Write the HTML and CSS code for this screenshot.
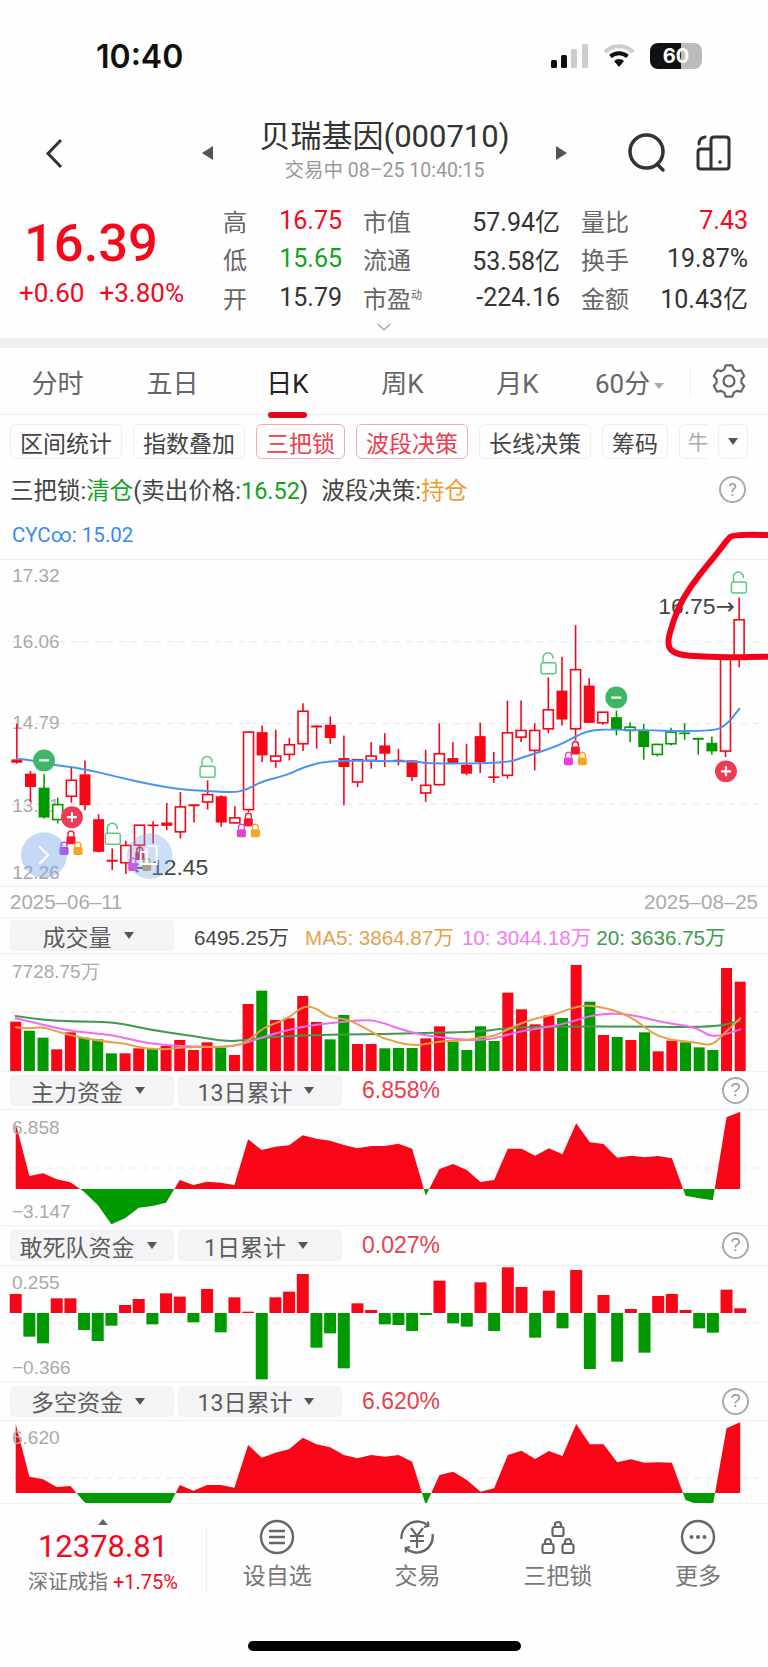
FILE: index.html
```html
<!DOCTYPE html>
<html lang="zh">

<head>
  <meta charset="UTF-8">
  <meta name="viewport" content="width=device-width, initial-scale=1.0">
  <title>贝瑞基因(000710)</title>
  <link rel="stylesheet" href="styles.css">
</head>

<body>

  <!-- 状态栏 -->
  <div class="status-bar">
    <span class="status-time">10:40</span>
    <div class="status-icons">
      <svg width="37" height="24" viewBox="0 0 37 24">
        <rect x="0" y="16" width="6" height="8" rx="1.5" fill="#111" />
        <rect x="10" y="11" width="6" height="13" rx="1.5" fill="#111" />
        <rect x="20" y="5" width="6" height="19" rx="1.5" fill="#ccc" />
        <rect x="31" y="0" width="6" height="24" rx="1.5" fill="#ccc" />
      </svg>
      <svg width="32" height="24" viewBox="0 0 32 24">
        <path d="M2 8 A20 20 0 0 1 30 8" fill="none" stroke="#ccc" stroke-width="4" />
        <path d="M7.500 12.500 A13 13 0 0 1 24.500 12.500" fill="none" stroke="#111" stroke-width="4" />
        <path d="M11 17 L16 23 L21 17 A7 7 0 0 0 11 17 Z" fill="#111" />
      </svg>
      <div class="battery"><span>60</span></div>
    </div>
  </div>

  <!-- 标题 -->
  <div class="stock-nav">
    <svg class="back-icon" width="18" height="31" viewBox="0 0 18 31">
      <path d="M16 2 L3 15.500 L16 29" fill="none" stroke="#333" stroke-width="3" />
    </svg>
    <span class="arrow-left"></span>
    <div class="stock-title">
      <h1>贝瑞基因(000710)</h1>
      <p>交易中 08–25 10:40:15</p>
    </div>
    <span class="arrow-right"></span>
    <div class="nav-icons">
      <svg width="41" height="40" viewBox="0 0 41 40">
        <circle cx="19.500" cy="18.500" r="16.500" fill="none" stroke="#333" stroke-width="3.500" />
        <path d="M30 31 L36 37" stroke="#333" stroke-width="3.500" stroke-linecap="round" />
      </svg>
      <svg width="35" height="36" viewBox="0 0 35 36">
        <path d="M15 34 V5 Q15 2 18 2 H30 Q33 2 33 5 V31 Q33 34 30 34 H5 Q2 34 2 31 V17 Q2 14 5 14 H15" fill="none" stroke="#333" stroke-width="3" stroke-linejoin="round" />
        <path d="M3 9 Q3 3 9 2" fill="none" stroke="#333" stroke-width="3" stroke-linecap="round" />
        <circle cx="24" cy="27" r="1.800" fill="#333" />
      </svg>
    </div>
  </div>

  <!-- 行情 -->
  <div class="quote">
    <div class="price-box">
      <div class="price">16.39</div>
      <div class="change"><span>+0.60</span><span>+3.80%</span></div>
    </div>
    <div class="stats">
      <span class="stat-label">高</span><span class="stat-value red">16.75</span>
      <span class="stat-label gap">市值</span><span class="stat-value">57.94亿</span>
      <span class="stat-label gap">量比</span><span class="stat-value red">7.43</span>
      <span class="stat-label">低</span><span class="stat-value green">15.65</span>
      <span class="stat-label gap">流通</span><span class="stat-value">53.58亿</span>
      <span class="stat-label gap">换手</span><span class="stat-value">19.87%</span>
      <span class="stat-label">开</span><span class="stat-value">15.79</span>
      <span class="stat-label gap">市盈<sup>动</sup></span><span class="stat-value">-224.16</span>
      <span class="stat-label gap">金额</span><span class="stat-value">10.43亿</span>
    </div>
  </div>
  <div class="expand">
    <svg width="14" height="9" viewBox="0 0 14 9">
      <path d="M1 1 L7 7 L13 1" fill="none" stroke="#aaa" stroke-width="1.500" />
    </svg>
  </div>
  <div class="divider"></div>

  <!-- 周期 -->
  <div class="period-tabs">
    <span class="period">分时</span>
    <span class="period">五日</span>
    <span class="period active">日K</span>
    <span class="period">周K</span>
    <span class="period">月K</span>
    <span class="period period-more">60分<i class="tri-small"></i></span>
    <span class="period-gear">
      <svg width="36" height="36" viewBox="0 0 36 36">
        <polygon points="13.3,6.400 14.670,2.350 21.330,2.350 22.700,6.400 25.700,8.150 29.900,7.300 33.200,13.060 30.400,16.260 30.400,19.740 33.200,22.940 29.900,28.700 25.700,27.850 22.700,29.600 21.330,33.650 14.670,33.650 13.300,29.600 10.300,27.850 6.100,28.700 2.800,22.940 5.600,19.740 5.600,16.260 2.800,13.060 6.100,7.300 10.300,8.150" fill="none" stroke="#666" stroke-width="2.200" stroke-linejoin="round" />
        <circle cx="18" cy="18" r="5.500" fill="none" stroke="#666" stroke-width="2.200" />
      </svg>
    </span>
  </div>

  <!-- 指标按钮 -->
  <div class="chip-row">
    <div class="chip-scroll">
      <span class="chip">区间统计</span>
      <span class="chip">指数叠加</span>
      <span class="chip on">三把锁</span>
      <span class="chip on">波段决策</span>
      <span class="chip">长线决策</span>
      <span class="chip">筹码</span>
      <span class="chip faded">牛</span>
    </div>
    <span class="chip chip-more"><i class="tri"></i></span>
  </div>

  <div class="signal-row">
    <span>三把锁:<b class="green">清仓</b>(卖出价格:<b class="green">16.52</b>)</span>
    <span class="signal-second">波段决策:<b class="orange">持仓</b></span>
    <span class="help">?</span>
  </div>
  <div class="cyc-row">CYC∞: 15.02</div>

  <!-- K线 -->
  <svg id="kChart" class="panel kline" width="768" height="327"></svg>
  <div class="date-row"><span>2025–06–11</span><span>2025–08–25</span></div>

  <!-- 成交量 -->
  <div class="panel-head vol-head">
    <span class="select">成交量<i class="tri"></i></span>
    <span class="vol-now">6495.25万</span>
    <span class="ma5">MA5: 3864.87万</span>
    <span class="ma10">10: 3044.18万</span>
    <span class="ma20">20: 3636.75万</span>
  </div>
  <svg id="volChart" class="panel" width="768" height="117"></svg>

  <div class="panel-head">
    <span class="select">主力资金<i class="tri"></i></span>
    <span class="select">13日累计<i class="tri"></i></span>
    <span class="pct">6.858%</span>
    <span class="help">?</span>
  </div>
  <svg id="mainChart" class="panel" width="768" height="115"></svg>

  <div class="panel-head tall-head">
    <span class="select">敢死队资金<i class="tri"></i></span>
    <span class="select">1日累计<i class="tri"></i></span>
    <span class="pct">0.027%</span>
    <span class="help">?</span>
  </div>
  <svg id="hotChart" class="panel" width="768" height="115"></svg>

  <div class="panel-head mid-head">
    <span class="select">多空资金<i class="tri"></i></span>
    <span class="select">13日累计<i class="tri"></i></span>
    <span class="pct">6.620%</span>
    <span class="help">?</span>
  </div>
  <svg id="longChart" class="panel" width="768" height="82"></svg>

  <!-- 底部 -->
  <div class="footer">
    <div class="footer-main">
      <div class="index-box">
        <i class="tri-up"></i>
        <div class="index-value">12378.81</div>
        <div class="index-name">深证成指 <span class="red">+1.75%</span></div>
      </div>
      <div class="footer-tabs">
        <div class="footer-tab">
          <svg width="36" height="36" viewBox="0 0 36 36">
            <circle cx="18" cy="18" r="16" fill="none" stroke="#666" stroke-width="2.400" />
            <path d="M10 12 H26 M10 18 H26 M10 24 H26" stroke="#666" stroke-width="2.400" />
          </svg>
          <span>设自选</span>
        </div>
        <div class="footer-tab">
          <svg width="36" height="36" viewBox="0 0 36 36">
            <path d="M2.500 20 A16 16 0 0 1 29 6.500 M33.500 15 A16 16 0 0 1 7 29.500" fill="none" stroke="#666" stroke-width="2.400" />
            <path d="M25 8 L29.500 7 L29 2.500 M11 28 L6.500 29 L7 33.500" fill="none" stroke="#666" stroke-width="2" />
            <path d="M12 9 L18 17 L24 9 M11 17 H25 M11 22 H25 M18 17 V29" fill="none" stroke="#666" stroke-width="2.200" />
          </svg>
          <span>交易</span>
        </div>
        <div class="footer-tab">
          <svg width="36" height="36" viewBox="0 0 36 36">
            <g fill="none" stroke="#666" stroke-width="2.200">
              <rect x="12.500" y="8" width="11" height="9" rx="2" />
              <path d="M15 8 V6 A3 3 0 0 1 21 6 V8" />
              <rect x="2.500" y="25" width="11" height="9" rx="2" />
              <path d="M5 25 V23 A3 3 0 0 1 11 23 V25" />
              <rect x="22.500" y="25" width="11" height="9" rx="2" />
              <path d="M25 25 V23 A3 3 0 0 1 31 23 V25" />
            </g>
          </svg>
          <span>三把锁</span>
        </div>
        <div class="footer-tab">
          <svg width="36" height="36" viewBox="0 0 36 36">
            <circle cx="18" cy="18" r="16" fill="none" stroke="#666" stroke-width="2.400" />
            <circle cx="11.500" cy="18" r="2" fill="#666" />
            <circle cx="18" cy="18" r="2" fill="#666" />
            <circle cx="24.500" cy="18" r="2" fill="#666" />
          </svg>
          <span>更多</span>
        </div>
      </div>
    </div>
    <div class="home-bar"></div>
  </div>

  <script src="chart.js"></script>

</body>

</html>
```

FILE: styles.css
```css
body {
  font-family: Roboto, "Noto Sans CJK SC", sans-serif;
  margin: 0;
  width: 768px;
  height: 1667px;
  overflow: hidden;
  background: #fefefe;
  color: #333;
}

.red {
  color: #f5081c;
}

.green {
  color: #12a21e;
}

.orange {
  color: #f59a30;
}

b {
  font-weight: normal;
}

/* 状态栏 */
.status-bar {
  height: 112px;
  display: flex;
  align-items: center;
  justify-content: space-between;
  padding: 0 66px 0 96px;
}

.status-time {
  font-family: Inter, sans-serif;
  font-size: 32px;
  font-weight: 600;
  color: #111;
}

.status-icons {
  display: flex;
  align-items: center;
  gap: 15px;
}

.battery {
  width: 52px;
  height: 26px;
  border-radius: 8px;
  background: linear-gradient(to right, #111 60%, #bbb 60%);
  color: white;
  font-family: Inter, sans-serif;
  font-size: 20px;
  font-weight: 700;
  line-height: 26px;
  text-align: center;
}

/* 标题 */
.stock-nav {
  height: 88px;
  display: grid;
  grid-template-columns: 202px 11px 343px 11px 1fr;
  align-items: center;
  padding-bottom: 12px;
  box-sizing: border-box;
}

.back-icon {
  margin: 6px 0 0 45px;
}

.arrow-left,
.arrow-right {
  width: 0;
  height: 0;
  margin-top: 6px;
  border-top: 7px solid transparent;
  border-bottom: 7px solid transparent;
}

.arrow-left {
  border-right: 11px solid #555;
}

.arrow-right {
  border-left: 11px solid #555;
}

.stock-title {
  text-align: center;
}

.stock-title h1 {
  margin: 0;
  font-size: 31px;
  font-weight: normal;
  line-height: 38px;
}

.stock-title p {
  margin: 4px 0 0;
  font-size: 19.500px;
  line-height: 22px;
  color: #999;
}

.nav-icons {
  display: flex;
  align-items: center;
  gap: 28px;
  margin-top: 6px;
  padding-left: 60px;
}

/* 行情 */
.quote {
  height: 118px;
  display: flex;
  padding-top: 1px;
  box-sizing: border-box;
}

.price-box {
  width: 223px;
  flex-shrink: 0;
}

.price {
  font-size: 52.500px;
  font-weight: 500;
  line-height: 56px;
  color: #f5081c;
  padding: 14px 0 0 24px;
}

.change {
  display: flex;
  gap: 15px;
  padding: 7px 0 0 19px;
  font-size: 26px;
  line-height: 30px;
  color: #f5081c;
}

.stats {
  display: grid;
  grid-template-columns: 40px 79px 101px 117px 72px 116px;
  grid-auto-rows: 38.500px;
  align-items: center;
  font-size: 25px;
}

.stat-label {
  color: #666;
  font-size: 24px;
}

.stat-label.gap {
  padding-left: 21px;
}

.stat-label sup {
  font-size: 11px;
  line-height: 0;
}

.stat-value {
  text-align: right;
}

.expand {
  height: 20px;
  padding-top: 5px;
  box-sizing: border-box;
}

.expand svg {
  display: block;
  margin: 0 auto;
}

.divider {
  height: 10px;
  background: #eee;
}

/* 周期 */
.period-tabs {
  height: 67px;
  display: flex;
  align-items: center;
  border-bottom: 1px solid #efefef;
  box-sizing: border-box;
}

.period {
  position: relative;
  width: 115px;
  flex-shrink: 0;
  text-align: center;
  font-size: 26px;
  color: #666;
}

.period.active {
  color: #222;
}

.period.active::after {
  content: "";
  position: absolute;
  left: 38px;
  bottom: -18px;
  width: 39px;
  height: 6px;
  border-radius: 3px;
  background: #e8061c;
}

.period-more {
  text-align: left;
  padding-left: 20px;
  box-sizing: border-box;
}

.tri-small {
  display: inline-block;
  margin-left: 4px;
  vertical-align: 4px;
  border-left: 5px solid transparent;
  border-right: 5px solid transparent;
  border-top: 6px solid #aaa;
}

.period-gear {
  height: 30px;
  display: flex;
  align-items: center;
  border-left: 1px solid #eee;
  padding-left: 20px;
}

/* 指标按钮 */
.chip-row {
  height: 35px;
  display: flex;
  margin: 9px 20px 0 10px;
  gap: 10px;
}

.chip-scroll {
  width: 698px;
  display: flex;
  gap: 11px;
}

.chip {
  flex-shrink: 0;
  display: flex;
  align-items: center;
  justify-content: center;
  padding: 0 9px;
  font-size: 23px;
  color: #444;
  border: 1px solid #eee;
  border-radius: 6px;
}

.chip.on {
  color: #e94050;
  border-color: #f6a8b0;
}

/* 被更多按钮挡住的最后一个 */
.chip.faded {
  padding: 0 0 0 8px;
  border-right: none;
  border-radius: 6px 0 0 6px;
  font-size: 20px;
  color: #aaa;
}

.chip-more {
  width: 30px;
  padding: 0;
  box-sizing: border-box;
}

.tri {
  display: inline-block;
  border-left: 5px solid transparent;
  border-right: 5px solid transparent;
  border-top: 7px solid #555;
}

.signal-row {
  height: 60px;
  display: flex;
  align-items: center;
  padding: 0 22px 0 10px;
  font-size: 23.500px;
  color: #444;
}

.signal-second {
  margin-left: 13px;
}

.help {
  width: 23px;
  height: 23px;
  margin-left: auto;
  border: 2px solid #aaa;
  border-radius: 50%;
  text-align: center;
  font-size: 18px;
  line-height: 23px;
  color: #999;
}

.cyc-row {
  height: 40px;
  padding: 0 0 8px 12px;
  box-sizing: border-box;
  display: flex;
  align-items: center;
  font-size: 20.500px;
  color: #3b8bee;
}

/* 图表 */
.panel {
  display: block;
}

.kline {
  overflow: visible;
  border-top: 1px solid #eee;
  box-sizing: border-box;
}

.axis-text {
  font-family: "Liberation Sans", sans-serif;
  font-size: 19px;
  fill: #aaa;
}

.mark-text {
  font-family: "Liberation Sans", sans-serif;
  font-size: 23px;
  fill: #444;
}

.mark-arrow {
  font-family: "DejaVu Sans", sans-serif;
}

.date-row {
  height: 31px;
  display: flex;
  justify-content: space-between;
  align-items: center;
  padding: 0 10px;
  border-top: 1px solid #eee;
  box-sizing: border-box;
  font-family: "Liberation Sans", sans-serif;
  font-size: 20.500px;
  color: #aaa;
}

.panel-head {
  height: 39px;
  display: flex;
  align-items: center;
  gap: 4px;
  padding: 0 19px 0 10px;
  border-bottom: 1px solid #eee;
  border-top: 1px solid #f2f2f2;
  box-sizing: border-box;
  font-family: "Liberation Sans", "Noto Sans CJK SC", sans-serif;
  font-size: 20.600px;
}

.vol-head {
  height: 37px;
}

.tall-head {
  height: 41px;
}

.mid-head {
  height: 40px;
}

.select {
  width: 164px;
  height: 31px;
  flex-shrink: 0;
  display: flex;
  align-items: center;
  justify-content: center;
  gap: 12px;
  padding-right: 8px;
  box-sizing: border-box;
  background: #f4f4f6;
  border-radius: 4px;
  font-family: Roboto, "Noto Sans CJK SC", sans-serif;
  font-size: 23px;
  color: #5c5c5c;
}

.vol-now {
  margin-left: 16px;
  color: #444;
}

.ma5 {
  margin-left: 12px;
  color: #e5a34c;
}

.ma10 {
  margin-left: 4px;
  color: #f47cf0;
}

.ma20 {
  margin-left: 1px;
  color: #3f9a4e;
}

.pct {
  margin-left: 16px;
  color: #e94050;
  font-size: 23px;
}

/* 底部 */
.footer {
  height: 164px;
  border-top: 1px solid #f2f2f2;
  box-sizing: border-box;
  background: #fefefe;
}

.footer-main {
  display: flex;
  height: 137px;
}

.index-box {
  width: 207px;
  height: 64px;
  margin-top: 24px;
  border-right: 1px solid #eee;
  box-sizing: border-box;
  position: relative;
  text-align: center;
}

.tri-up {
  position: absolute;
  top: -9px;
  left: 98px;
  border-left: 5px solid transparent;
  border-right: 5px solid transparent;
  border-bottom: 6px solid #666;
}

.index-value {
  font-size: 31px;
  line-height: 38px;
  color: #f5081c;
}

.index-name {
  font-size: 20px;
  line-height: 26px;
  margin-top: 3px;
  color: #777;
}

.footer-tabs {
  flex: 1;
  display: grid;
  grid-template-columns: repeat(4, 1fr);
}

.footer-tab {
  display: flex;
  flex-direction: column;
  align-items: center;
  padding-top: 15px;
  font-size: 23px;
  color: #777;
}

.footer-tab span {
  margin-top: 2px;
}

.home-bar {
  width: 273px;
  height: 10px;
  margin: 0 auto;
  border-radius: 5px;
  background: #000;
}
```

FILE: chart.js
```js
// 所有坐标都是页面像素，viewBox 直接对齐页面位置
const RED = '#f80517';
const GREEN = '#009a00';
const SVG_NS = 'http://www.w3.org/2000/svg';

function el(parent, name, attrs, text) {
  const node = document.createElementNS(SVG_NS, name);
  for (const k in attrs) node.setAttribute(k, attrs[k]);
  if (text) node.textContent = text;
  parent.appendChild(node);
  return node;
}

function setup(id, top) {
  const svg = document.getElementById(id);
  svg.setAttribute('viewBox', `0 ${top} 768 ${svg.getAttribute('height')}`);
  return svg;
}

const barX = i => 15.7 + 13.67 * i;

function dashed(svg, y) {
  el(svg, 'line', { x1: 10, x2: 759, y1: y, y2: y, stroke: '#e6e6e6', 'stroke-dasharray': '6 6' });
}

function label(svg, x, y, text) {
  el(svg, 'text', { x, y: y + 7, class: 'axis-text' }, text);
}

// 折线转圆滑曲线，经过相邻点的中点
function smooth(svg, pts, color, width) {
  let d = `M${pts[0][0]} ${pts[0][1]}`;
  for (let i = 1; i < pts.length - 1; i++) {
    const mx = (pts[i][0] + pts[i + 1][0]) / 2;
    const my = (pts[i][1] + pts[i + 1][1]) / 2;
    d += ` Q${pts[i][0]} ${pts[i][1]} ${mx} ${my}`;
  }
  const last = pts[pts.length - 1];
  d += ` L${last[0]} ${last[1]}`;
  el(svg, 'path', { d, fill: 'none', stroke: color, 'stroke-width': width, 'stroke-linecap': 'round' });
}

// K线: [最高, 最低, 实体上, 实体下, 类型] h空心红 f实心红 g实心绿 o空心绿
const leftCandles = [
  [490, 610, 597, 607, 'f'], [632, 725, 640, 680, 'f'], [642, 775, 682, 772, 'g'], [712, 790, 733, 778, 'o'],
  [623, 727, 660, 708, 'h'], [600, 750, 642, 735, 'f'], [762, 877, 777, 875, 'f'], [865, 930, 899, 905, 'f'],
  [842, 942, 856, 908, 'h'], [795, 890, 795, 855, 'h'], [783, 850, 793, 798, 'f'], [728, 810, 787, 797, 'f'],
  [695, 835, 740, 815, 'h'], [732, 787, 732, 738, 'f'], [660, 748, 703, 725, 'h'], [705, 800, 708, 787, 'f'],
  [738, 790, 773, 788, 'h'], [513, 755, 515, 748, 'h'], [495, 605, 515, 585, 'f'], [508, 622, 587, 602, 'h'],
  [532, 600, 553, 582, 'h'], [428, 572, 452, 550, 'h'], [495, 565, 495, 501, 'f'], [468, 550, 493, 533, 'f'],
  [525, 735, 593, 620, 'f'], [598, 680, 598, 665, 'h'], [545, 625, 587, 600, 'h']
].map(c => [560 + c[0] / 3, 560 + c[1] / 3, 560 + c[2] / 3, 560 + c[3] / 3, c[4]]);

const rightCandles = [
  [608, 710, 645, 670, 'f'], [655, 705, 688, 693, 'f'], [690, 752, 690, 740, 'f'], [658, 815, 765, 788, 'h'],
  [578, 765, 670, 763, 'h'], [635, 700, 683, 700, 'f'], [640, 735, 703, 730, 'f'], [577, 728, 617, 695, 'f'],
  [665, 758, 738, 743, 'f'], [510, 745, 607, 735, 'h'], [510, 635, 600, 620, 'h'], [578, 720, 600, 660, 'h'],
  [440, 608, 538, 595, 'h'], [378, 585, 480, 567, 'f'], [283, 630, 417, 595, 'h'], [443, 577, 465, 577, 'f'],
  [545, 583, 545, 577, 'h'], [540, 615, 560, 597, 'g'], [575, 635, 590, 600, 'o'], [580, 688, 600, 650, 'g'],
  [640, 678, 642, 672, 'o'], [592, 645, 605, 640, 'o'], [578, 628, 606, 611, 'g'], [622, 673, 622, 628, 'g'],
  [618, 673, 637, 663, 'g'], [375, 680, 375, 662, 'h'], [200, 410, 267, 385, 'h']
].map(c => [530 + c[0] / 3, 530 + c[1] / 3, 530 + c[2] / 3, 530 + c[3] / 3, c[4]]);

function drawCandles(svg, candles) {
  candles.forEach((c, i) => {
    const x = barX(i);
    const color = c[4] === 'h' || c[4] === 'f' ? RED : GREEN;
    el(svg, 'line', { x1: x, x2: x, y1: c[0], y2: c[1], stroke: color, 'stroke-width': 1.6 });
    if (c[4] === 'h' || c[4] === 'o') {
      el(svg, 'rect', { x: x - 5, y: c[2], width: 10, height: c[3] - c[2], fill: '#fff', stroke: color, 'stroke-width': 1.6 });
    } else {
      el(svg, 'rect', { x: x - 5.5, y: c[2], width: 11, height: c[3] - c[2], fill: color });
    }
  });
}

function openLock(svg, x, y) {
  const g = el(svg, 'g', { fill: 'none', stroke: '#5cc97d', 'stroke-width': 1.5 });
  el(g, 'rect', { x: x - 7.5, y: y - 1, width: 15, height: 11, rx: 2 });
  el(g, 'path', { d: `M${x - 5.5} ${y - 1} V${y - 6} A5 5 0 0 1 ${x + 4.5} ${y - 6} V${y - 5}` });
}

function smallLock(svg, x, y, color) {
  el(svg, 'rect', { x: x - 4.5, y: y - 2, width: 9, height: 8, rx: 1.5, fill: color });
  el(svg, 'path', { d: `M${x - 3} ${y - 2} V${y - 4} A3 3 0 0 1 ${x + 3} ${y - 4} V${y - 2}`, fill: 'none', stroke: color, 'stroke-width': 1.4 });
}

function lockGroup(svg, x, y, left, right) {
  smallLock(svg, x, y, '#f0162c');
  smallLock(svg, x - 7, y + 11, left);
  smallLock(svg, x + 7, y + 11, right);
}

function signal(svg, x, y, color, plus) {
  el(svg, 'circle', { cx: x, cy: y, r: 11, fill: color });
  el(svg, 'path', { d: plus ? `M${x - 5} ${y} H${x + 5} M${x} ${y - 5} V${y + 5}` : `M${x - 5} ${y} H${x + 5}`, stroke: '#fff', 'stroke-width': 2.2 });
}

function drawKChart() {
  const svg = setup('kChart', 559);
  [641, 723, 804].forEach(y => dashed(svg, y));
  label(svg, 11, 574, '17.32');
  label(svg, 11, 640, '16.06');
  label(svg, 11, 722, '14.79');
  label(svg, 11, 805, '13.61');
  label(svg, 11, 872, '12.26');

  drawCandles(svg, leftCandles.concat(rightCandles));

  // CYC∞ 线
  const blue = [[47, 595], [100, 600], [130, 610], [250, 625], [350, 650], [450, 672], [540, 688], [620, 692], [700, 697], [740, 688], [785, 662], [860, 645], [910, 620], [985, 600], [1150, 602]]
    .map(p => [p[0] / 3, 560 + p[1] / 3]);
  const blue2 = [[100, 693], [130, 700], [370, 698], [420, 680], [530, 645], [610, 598], [700, 597], [985, 604], [1030, 585], [1069, 535]]
    .map(p => [384 + p[0] / 3, 530 + p[1] / 3]);
  smooth(svg, blue.concat(blue2), '#4a94f0', 2);

  signal(svg, 43, 760, '#3db765', false);
  signal(svg, 617, 697, '#3db765', false);
  signal(svg, 71, 817, '#ea3c55', true);
  signal(svg, 727, 771, '#ea3c55', true);

  openLock(svg, 207, 767);
  openLock(svg, 112, 834);
  openLock(svg, 549, 663);
  openLock(svg, 740, 582);

  const low = el(svg, 'text', { x: 131, y: 875, class: 'mark-text' });
  el(low, 'tspan', { class: 'mark-arrow' }, '←');
  el(low, 'tspan', {}, '12.45');
  const high = el(svg, 'text', { x: 659, y: 613, class: 'mark-text' }, '16.75');
  el(high, 'tspan', { class: 'mark-arrow' }, '→');

  lockGroup(svg, 70, 838, '#b93fd8', '#f5a623');
  lockGroup(svg, 248, 820, '#e83fd8', '#f5a623');
  lockGroup(svg, 139, 854, '#e83fd8', '#c89a4a');
  lockGroup(svg, 576, 748, '#e83fd8', '#f5a623');

  // 悬浮按钮
  el(svg, 'circle', { cx: 43, cy: 855, r: 23, fill: 'rgba(120,165,235,.42)' });
  el(svg, 'path', { d: 'M38 846 L47 855 L38 864', fill: 'none', stroke: '#fff', 'stroke-width': 2 });
  el(svg, 'circle', { cx: 149, cy: 856, r: 23, fill: 'rgba(120,165,235,.36)' });
  el(svg, 'path', { d: 'M146 848 V864 M146 846 H156 V864 H140 V852 H146', fill: 'none', stroke: '#fff', 'stroke-width': 2 });

  // 手绘红圈
  const ink = [[1152, 12], [1050, 8], [1030, 30], [1000, 70], [950, 130], [900, 200], [870, 270], [850, 345], [880, 372], [960, 378], [1050, 380], [1152, 378]]
    .map(p => [384 + p[0] / 3, 530 + p[1] / 3]);
  smooth(svg, ink, '#f5001a', 6);
}

function drawVolume() {
  const svg = setup('volChart', 954);
  const h = [[335, 'r'], [362, 'g'], [383, 'g'], [418, 'r'], [367, 'r'], [383, 'g'], [388, 'g'], [430, 'g'], [430, 'r'], [415, 'r'],
    [415, 'g'], [408, 'r'], [390, 'r'], [420, 'r'], [397, 'r'], [413, 'g'], [435, 'r'], [282, 'r'], [242, 'g'], [330, 'r'],
    [325, 'r'], [258, 'r'], [336, 'r'], [388, 'g'], [315, 'g'], [402, 'r'], [402, 'r'], [415, 'g'], [414, 'g'], [414, 'g'],
    [385, 'r'], [349, 'r'], [395, 'g'], [420, 'g'], [349, 'g'], [393, 'g'], [248, 'r'], [298, 'r'], [343, 'r'], [316, 'r'],
    [324, 'g'], [165, 'r'], [275, 'g'], [375, 'r'], [381, 'g'], [390, 'r'], [367, 'g'], [424, 'r'], [392, 'r'], [397, 'g'],
    [412, 'g'], [420, 'g'], [174, 'r'], [215, 'r']];
  const base = 1071;
  dashed(svg, 1012);
  label(svg, 12, 971, '7728.75万');
  h.forEach((b, i) => {
    const top = 910 + b[0] / 3;
    el(svg, 'rect', { x: barX(i) - 5.5, y: top, width: 11, height: base - top, fill: b[1] === 'r' ? RED : GREEN });
  });

  const conv = (l, r) => l.map(p => [p[0] / 3, 910 + p[1] / 3]).concat(r.map(p => [384 + p[0] / 3, 910 + p[1] / 3]));
  smooth(svg, conv([[47, 318], [130, 330], [220, 335], [340, 335], [450, 360], [560, 375], [640, 388], [700, 395], [790, 382], [930, 375], [1150, 372]],
    [[0, 372], [300, 365], [360, 353], [640, 348], [985, 353], [1069, 332]]), '#3f9a4e', 2);
  smooth(svg, conv([[47, 325], [130, 345], [220, 365], [340, 375], [440, 400], [540, 408], [700, 413], [790, 380], [900, 350], [1000, 338], [1110, 328], [1150, 340]],
    [[0, 340], [70, 365], [150, 380], [300, 395], [400, 365], [540, 343], [640, 310], [740, 312], [820, 335], [940, 352], [985, 385], [1069, 358]]), '#f26cf2', 2);
  smooth(svg, conv([[47, 352], [85, 357], [130, 350], [170, 365], [250, 385], [330, 397], [375, 400], [420, 413], [490, 420], [560, 410], [700, 412], [750, 390], [790, 352], [860, 328], [910, 288], [945, 292], [990, 325], [1030, 325], [1070, 340], [1150, 385]],
    [[0, 385], [85, 410], [170, 392], [250, 392], [290, 380], [330, 380], [380, 353], [450, 325], [510, 315], [580, 287], [640, 287], [740, 316], [820, 385], [940, 398], [985, 408], [1030, 360], [1069, 325]]), '#e8a048', 2);
}

// 面积图: 同一折线用 clipPath 分成基线上红、基线下绿
function drawArea(svg, id, values, toY, base) {
  const pts = values.map((v, i) => `${barX(i)},${toY(v)}`);
  const poly = `${barX(0)},${base} ${pts.join(' ')} ${barX(values.length - 1)},${base}`;
  const defs = el(svg, 'defs', {});
  const up = el(defs, 'clipPath', { id: id + 'Up' });
  el(up, 'rect', { x: 0, y: base - 200, width: 768, height: 200 });
  const down = el(defs, 'clipPath', { id: id + 'Down' });
  el(down, 'rect', { x: 0, y: base, width: 768, height: 200 });
  el(svg, 'polygon', { points: poly, fill: RED, 'clip-path': `url(#${id}Up)` });
  el(svg, 'polygon', { points: poly, fill: GREEN, 'clip-path': `url(#${id}Down)` });
}

function drawMain() {
  const svg = setup('mainChart', 1110);
  dashed(svg, 1168);
  const v = [640, 798, 790, 808, 817, 845, 885, 943, 925, 893, 888, 878, 810, 825, 815, 818, 825, 688, 720, 710, 706, 676, 686, 692, 705, 715, 708, 708,
    701, 716, 857, 777, 762, 780, 816, 810, 716, 716, 737, 715, 733, 640, 697, 702, 743, 737, 742, 738, 745, 857, 865, 871, 622, 605];
  drawArea(svg, 'main', v, y => 910 + y / 3, 1189);
  label(svg, 12, 1127, '6.858');
  label(svg, 12, 1211, '−3.147');
}

function drawHot() {
  const svg = setup('hotChart', 1266);
  dashed(svg, 1323);
  const v = [207, 335, 355, 220, 220, 315, 348, 302, 240, 222, 298, 205, 215, 292, 192, 322, 217, 260, 463, 217, 200, 147, 368, 325, 430, 235, 255, 298,
    300, 318, 270, 167, 295, 305, 172, 318, 127, 186, 338, 197, 310, 135, 432, 210, 410, 252, 383, 213, 207, 255, 310, 323, 194, 250];
  const base = 1313;
  v.forEach((z, i) => {
    const y = 1225 + z / 3;
    el(svg, 'rect', { x: barX(i) - 6, y: Math.min(y, base), width: 12, height: Math.max(Math.abs(y - base), 1), fill: y < base ? RED : GREEN });
  });
  label(svg, 12, 1282, '0.255');
  label(svg, 12, 1367, '−0.366');
}

function drawLong() {
  const svg = setup('longChart', 1421);
  dashed(svg, 1478);
  const v = [597, 755, 763, 786, 783, 830, 860, 860, 860, 860, 860, 860, 780, 797, 780, 780, 788, 660, 698, 683, 673, 638, 658, 667, 690, 700, 690, 695,
    690, 710, 840, 750, 740, 765, 800, 790, 690, 677, 702, 678, 693, 597, 658, 658, 712, 703, 713, 712, 713, 825, 840, 840, 610, 592];
  drawArea(svg, 'long', v, y => 1225 + y / 3, 1493);
  label(svg, 12, 1437, '6.620');
}

drawKChart();
drawVolume();
drawMain();
drawHot();
drawLong();
```
